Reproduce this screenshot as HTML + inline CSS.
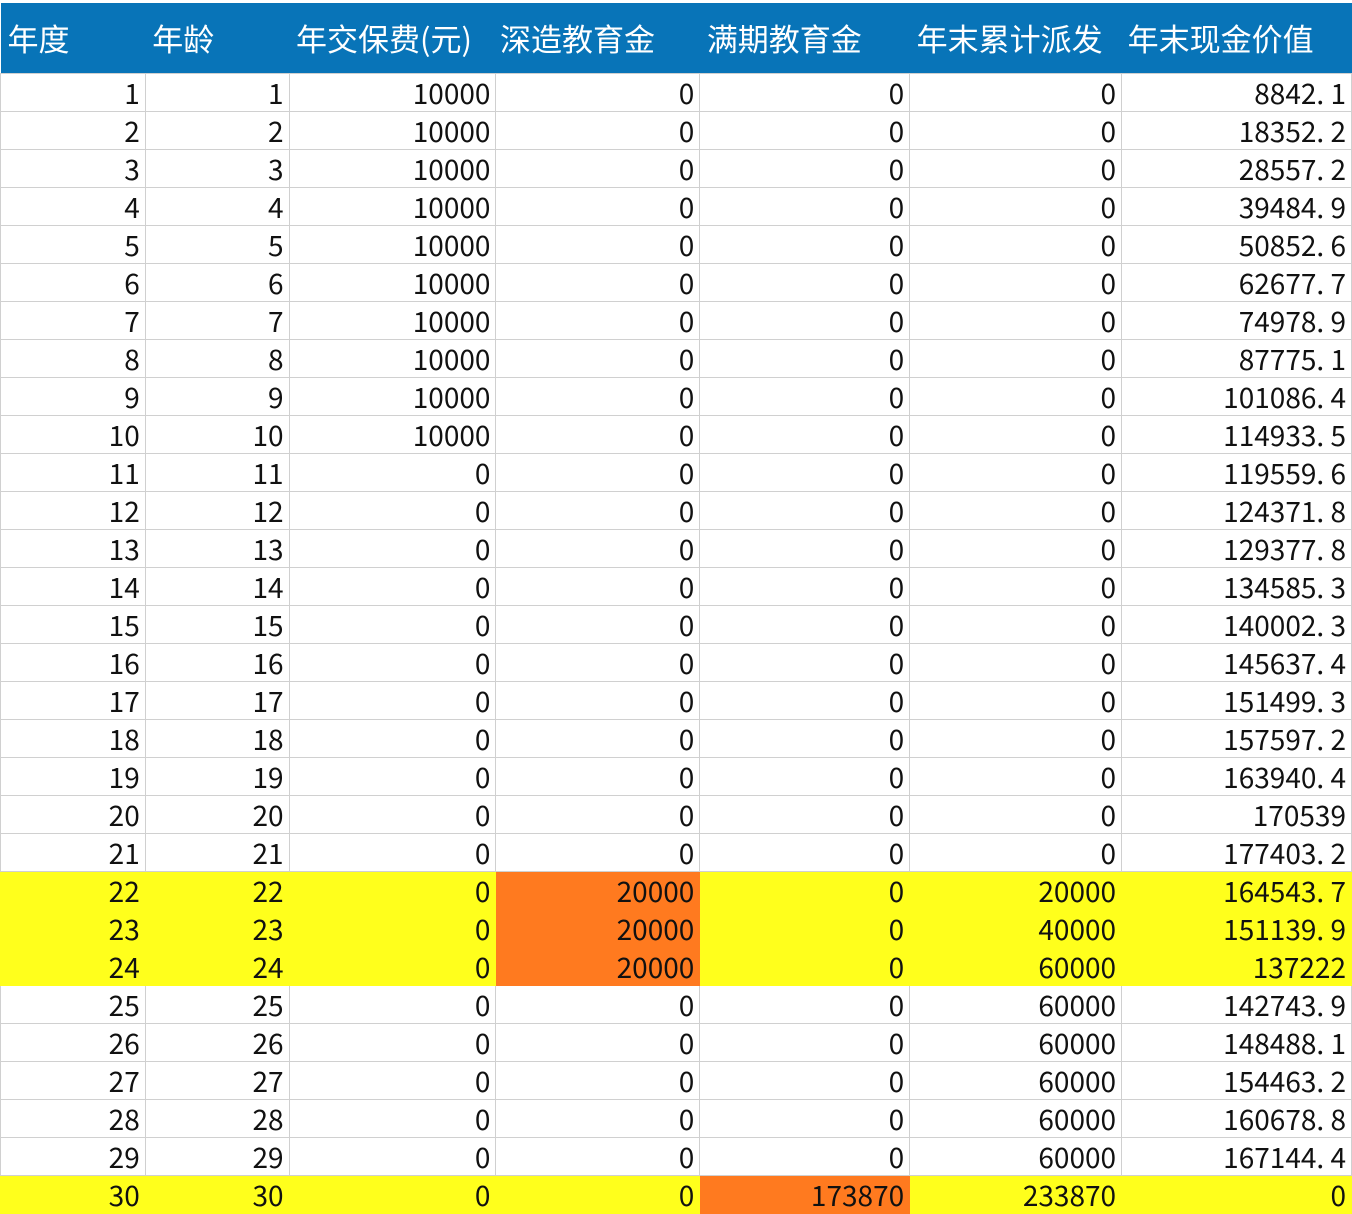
<!DOCTYPE html>
<html><head><meta charset="utf-8"><style>
html,body{margin:0;padding:0;background:#fff;width:1352px;height:1214px;overflow:hidden}
table{border-collapse:collapse;table-layout:fixed;position:absolute;left:0;top:3px;font-family:"Noto Sans CJK SC","Liberation Sans",sans-serif;font-size:28px;color:#111}
td{height:35px;padding:2px 5px 0 0;text-align:right;border:1px solid #d0d0d0;line-height:35px;white-space:nowrap;overflow:hidden;vertical-align:middle}
tr.h td{background:#0874B8;color:#fff;height:70px;text-align:left;padding:0 0 0 7px;border:none;line-height:70px;vertical-align:middle;font-size:31px}
tr.y td{background:#FFFF1C;border-color:#FFFF1C}
td.o{background:#FF7A1F!important;border-color:#FF7A1F!important}
</style></head><body>
<table>
<colgroup><col style="width:145px"><col style="width:144px"><col style="width:207px"><col style="width:204px"><col style="width:210px"><col style="width:212px"><col style="width:230px"></colgroup>
<tr class="h"><td>年度</td><td>年龄</td><td>年交保费(元)</td><td style="padding-left:4px">深造教育金</td><td>满期教育金</td><td>年末累计派发</td><td style="padding-left:6px">年末现金价值</td></tr>
<tr><td>1</td><td>1</td><td>10000</td><td>0</td><td>0</td><td>0</td><td>8842. 1</td></tr>
<tr><td>2</td><td>2</td><td>10000</td><td>0</td><td>0</td><td>0</td><td>18352. 2</td></tr>
<tr><td>3</td><td>3</td><td>10000</td><td>0</td><td>0</td><td>0</td><td>28557. 2</td></tr>
<tr><td>4</td><td>4</td><td>10000</td><td>0</td><td>0</td><td>0</td><td>39484. 9</td></tr>
<tr><td>5</td><td>5</td><td>10000</td><td>0</td><td>0</td><td>0</td><td>50852. 6</td></tr>
<tr><td>6</td><td>6</td><td>10000</td><td>0</td><td>0</td><td>0</td><td>62677. 7</td></tr>
<tr><td>7</td><td>7</td><td>10000</td><td>0</td><td>0</td><td>0</td><td>74978. 9</td></tr>
<tr><td>8</td><td>8</td><td>10000</td><td>0</td><td>0</td><td>0</td><td>87775. 1</td></tr>
<tr><td>9</td><td>9</td><td>10000</td><td>0</td><td>0</td><td>0</td><td>101086. 4</td></tr>
<tr><td>10</td><td>10</td><td>10000</td><td>0</td><td>0</td><td>0</td><td>114933. 5</td></tr>
<tr><td>11</td><td>11</td><td>0</td><td>0</td><td>0</td><td>0</td><td>119559. 6</td></tr>
<tr><td>12</td><td>12</td><td>0</td><td>0</td><td>0</td><td>0</td><td>124371. 8</td></tr>
<tr><td>13</td><td>13</td><td>0</td><td>0</td><td>0</td><td>0</td><td>129377. 8</td></tr>
<tr><td>14</td><td>14</td><td>0</td><td>0</td><td>0</td><td>0</td><td>134585. 3</td></tr>
<tr><td>15</td><td>15</td><td>0</td><td>0</td><td>0</td><td>0</td><td>140002. 3</td></tr>
<tr><td>16</td><td>16</td><td>0</td><td>0</td><td>0</td><td>0</td><td>145637. 4</td></tr>
<tr><td>17</td><td>17</td><td>0</td><td>0</td><td>0</td><td>0</td><td>151499. 3</td></tr>
<tr><td>18</td><td>18</td><td>0</td><td>0</td><td>0</td><td>0</td><td>157597. 2</td></tr>
<tr><td>19</td><td>19</td><td>0</td><td>0</td><td>0</td><td>0</td><td>163940. 4</td></tr>
<tr><td>20</td><td>20</td><td>0</td><td>0</td><td>0</td><td>0</td><td>170539</td></tr>
<tr><td>21</td><td>21</td><td>0</td><td>0</td><td>0</td><td>0</td><td>177403. 2</td></tr>
<tr class="y"><td>22</td><td>22</td><td>0</td><td class="o">20000</td><td>0</td><td>20000</td><td>164543. 7</td></tr>
<tr class="y"><td>23</td><td>23</td><td>0</td><td class="o">20000</td><td>0</td><td>40000</td><td>151139. 9</td></tr>
<tr class="y"><td>24</td><td>24</td><td>0</td><td class="o">20000</td><td>0</td><td>60000</td><td>137222</td></tr>
<tr><td>25</td><td>25</td><td>0</td><td>0</td><td>0</td><td>60000</td><td>142743. 9</td></tr>
<tr><td>26</td><td>26</td><td>0</td><td>0</td><td>0</td><td>60000</td><td>148488. 1</td></tr>
<tr><td>27</td><td>27</td><td>0</td><td>0</td><td>0</td><td>60000</td><td>154463. 2</td></tr>
<tr><td>28</td><td>28</td><td>0</td><td>0</td><td>0</td><td>60000</td><td>160678. 8</td></tr>
<tr><td>29</td><td>29</td><td>0</td><td>0</td><td>0</td><td>60000</td><td>167144. 4</td></tr>
<tr class="y"><td>30</td><td>30</td><td>0</td><td>0</td><td class="o">173870</td><td>233870</td><td>0</td></tr>
</table>
</body></html>
